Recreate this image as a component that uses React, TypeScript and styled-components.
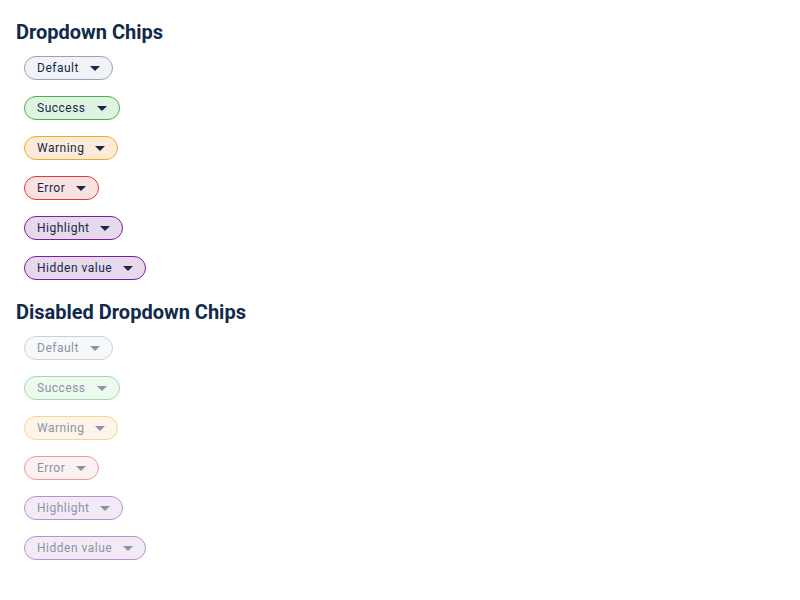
import React from "react";
import styled, { createGlobalStyle, css } from "styled-components";

const GlobalStyle = createGlobalStyle`
  html, body { margin: 0; padding: 0; background: #ffffff; }
  body { font-family: Roboto, "Noto Sans", sans-serif; }
`;

type Variant = "default" | "success" | "warning" | "error" | "highlight" | "hidden";

const palette: Record<Variant, { bg: string; border: string; dbg: string; dborder: string }> = {
  default: { bg: "#f1f3f6", border: "#97a3b6", dbg: "#f7f8fa", dborder: "#cbd2dc" },
  success: { bg: "#dff4e0", border: "#4caf50", dbg: "#eef9ef", dborder: "#a5d9a7" },
  warning: { bg: "#fdebd9", border: "#f5a623", dbg: "#fef4ea", dborder: "#fad291" },
  error: { bg: "#fae2e1", border: "#e0393e", dbg: "#fcf0f0", dborder: "#ef9a9c" },
  highlight: { bg: "#e7d9ec", border: "#7b1fa2", dbg: "#f2ebf5", dborder: "#bd8fd1" },
  hidden: { bg: "#e7d9ec", border: "#7b1fa2", dbg: "#f2ebf5", dborder: "#bd8fd1" },
};

const Page = styled.div`
  padding: 20px 16px;
  display: flex;
  flex-direction: column;
  gap: 20px;
`;

const Section = styled.section`
  display: flex;
  flex-direction: column;
  gap: 12px;
`;

const Heading = styled.h2`
  margin: 0;
  font-family: Roboto, sans-serif;
  font-size: 20px;
  line-height: 24px;
  font-weight: 700;
  color: #11294a;
`;

const ChipList = styled.div`
  display: flex;
  flex-direction: column;
  align-items: flex-start;
  gap: 16px;
  padding-left: 8px;
`;

const Chip = styled.button<{ $variant: Variant; $disabled?: boolean }>`
  box-sizing: border-box;
  height: 24px;
  display: inline-flex;
  align-items: center;
  gap: 11px;
  padding: 0 12px 0 12px;
  border-radius: 12px;
  font-family: Roboto, sans-serif;
  font-size: 12px;
  letter-spacing: 0.5px;
  line-height: 16px;
  cursor: pointer;
  ${({ $variant, $disabled }) =>
    $disabled
      ? css`
          background: ${palette[$variant].dbg};
          border: 1px solid ${palette[$variant].dborder};
          color: #8a94a6;
          cursor: default;
        `
      : css`
          background: ${palette[$variant].bg};
          border: 1px solid ${palette[$variant].border};
          color: #16284a;
        `}
`;

const Caret = styled.svg`
  width: 10px;
  height: 5px;
  flex: none;
`;

const chips: { label: string; variant: Variant }[] = [
  { label: "Default", variant: "default" },
  { label: "Success", variant: "success" },
  { label: "Warning", variant: "warning" },
  { label: "Error", variant: "error" },
  { label: "Highlight", variant: "highlight" },
  { label: "Hidden value", variant: "hidden" },
];

const DropdownChip: React.FC<{ label: string; variant: Variant; disabled?: boolean }> = ({
  label,
  variant,
  disabled,
}) => (
  <Chip $variant={variant} $disabled={disabled} disabled={disabled} type="button">
    <span>{label}</span>
    <Caret viewBox="0 0 10 5" aria-hidden>
      <path d="M0 0 L10 0 L5 5 Z" fill={disabled ? "#8a94a6" : "#16284a"} />
    </Caret>
  </Chip>
);

export default function App() {
  return (
    <>
      <GlobalStyle />
      <Page>
        <Section>
          <Heading>Dropdown Chips</Heading>
          <ChipList>
            {chips.map((c) => (
              <DropdownChip key={c.label} label={c.label} variant={c.variant} />
            ))}
          </ChipList>
        </Section>
        <Section>
          <Heading>Disabled Dropdown Chips</Heading>
          <ChipList>
            {chips.map((c) => (
              <DropdownChip key={c.label} label={c.label} variant={c.variant} disabled />
            ))}
          </ChipList>
        </Section>
      </Page>
    </>
  );
}
